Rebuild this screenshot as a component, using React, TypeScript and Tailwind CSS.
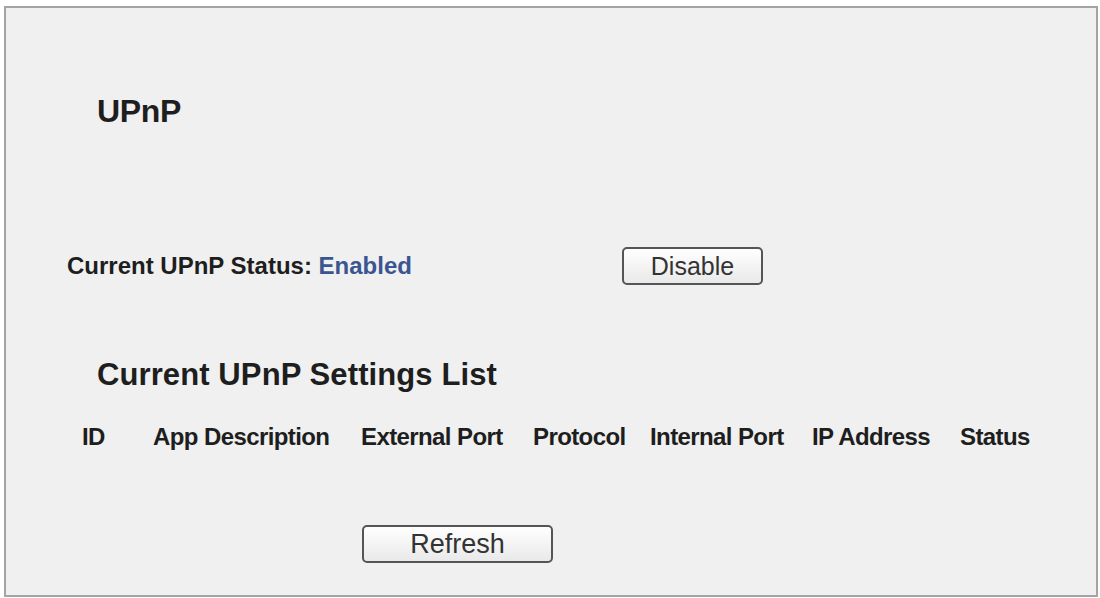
import React from 'react';

const columns = [
  { label: 'ID', width: 'w-[71px]' },
  { label: 'App Description', width: 'w-[208px]' },
  { label: 'External Port', width: 'w-[172px]' },
  { label: 'Protocol', width: 'w-[117px]' },
  { label: 'Internal Port', width: 'w-[162px]' },
  { label: 'IP Address', width: 'w-[148px]' },
  { label: 'Status', width: 'w-[100px]' },
];

const App: React.FC = () => {
  return (
    <div className="w-[1100px] h-[598px] bg-white pt-[6px] pl-[4px] overflow-hidden" style={{ fontFamily: '"Liberation Sans", Arial, sans-serif' }}>
      <div className="w-[1094px] h-[591px] border-2 border-[#a4a4a4] bg-[#f0f0f0] text-[#1e1e1e]">
        <h1 className="mt-[87px] ml-[91px] text-[32px] leading-none font-bold tracking-[-0.3px]">UPnP</h1>

        <div className="mt-[120px] flex items-center h-[38px]">
          <p className="ml-[61px] w-[555px] text-[24px] leading-none font-bold">
            Current UPnP Status: <span className="text-[#3b5591]">Enabled</span>
          </p>
          <button className="w-[141px] h-[38px] rounded-[5px] border-2 border-[#555] bg-gradient-to-b from-white to-[#e9e9e9] text-[25px] leading-none text-[#333]">
            Disable
          </button>
        </div>

        <h2 className="mt-[74px] ml-[91px] text-[31px] leading-none font-bold tracking-[0.1px]">Current UPnP Settings List</h2>

        <div className="mt-[35px] ml-[76px] flex text-[24px] leading-none font-bold tracking-[-0.6px]">
          {columns.map(col => (
            <div key={col.label} className={`${col.width} shrink-0`}>{col.label}</div>
          ))}
        </div>

        <div className="mt-[76px] ml-[356px]">
          <button className="w-[191px] h-[38px] rounded-[5px] border-2 border-[#555] bg-gradient-to-b from-white to-[#e9e9e9] text-[27px] leading-none text-[#333]">
            Refresh
          </button>
        </div>
      </div>
    </div>
  );
};

export default App;
